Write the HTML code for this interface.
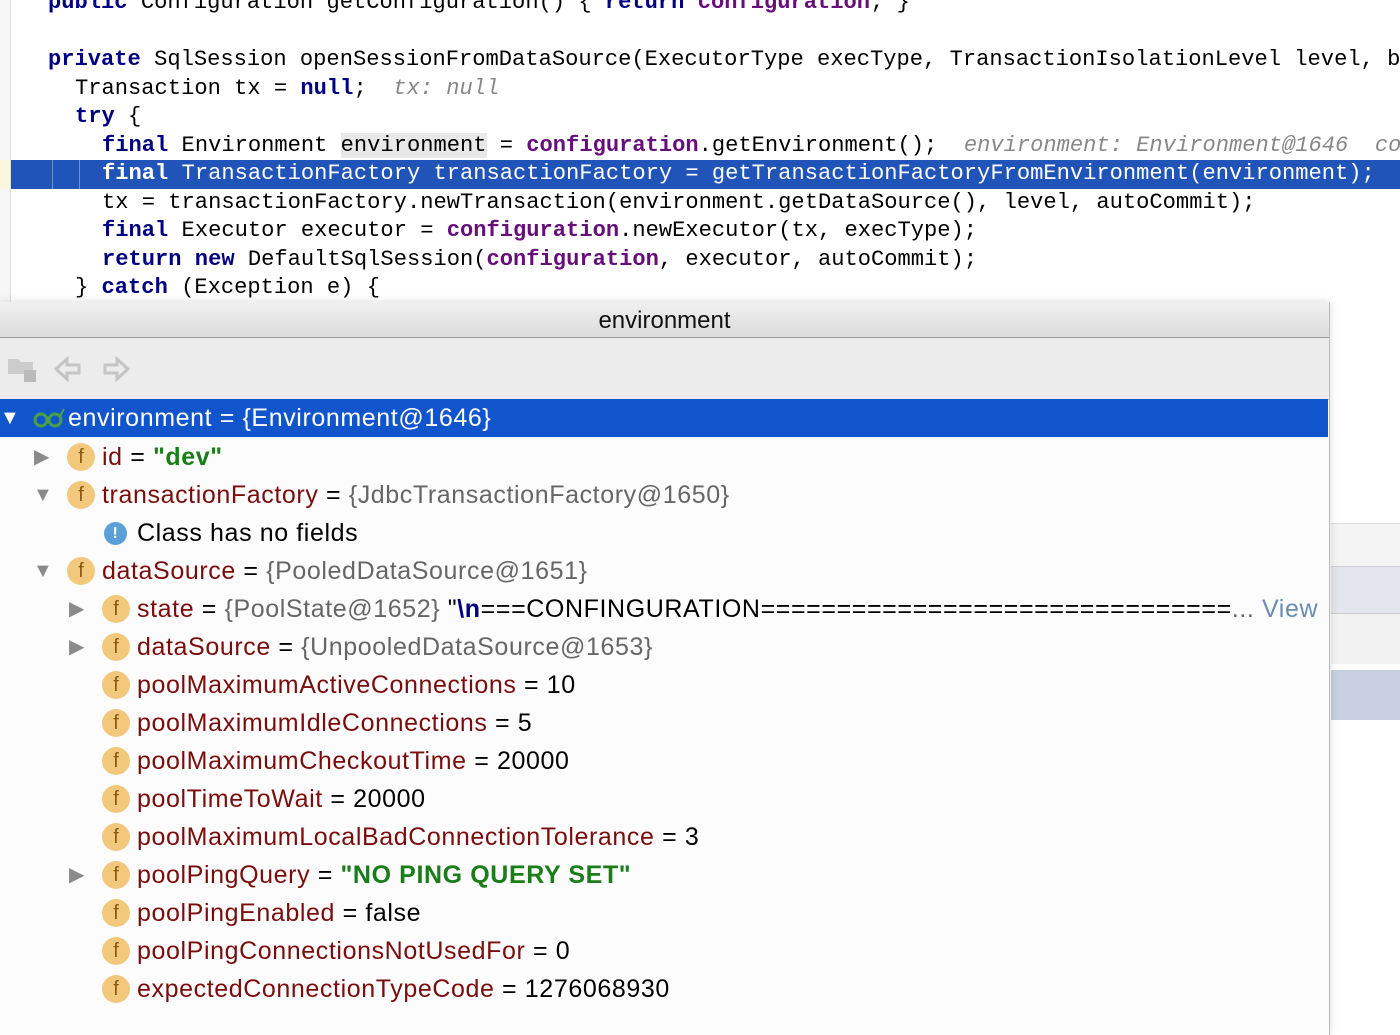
<!DOCTYPE html>
<html><head><meta charset="utf-8"><style>
html,body{margin:0;padding:0;width:1400px;height:1035px;overflow:hidden;background:#fff;position:relative}
.code{position:absolute;left:0;top:2px;width:1400px;font-family:"Liberation Mono",monospace;font-size:22.1px;color:#000}
.ln{position:absolute;height:28.5px;line-height:28.5px;white-space:pre;left:11px;width:1389px}
.kw{color:#000080;font-weight:bold}
.pu{color:#660e7a;font-weight:bold}
.hint{color:#888;font-style:italic}
.hl{background:#2154b8;color:#fff}
.hl .kw,.hl .pu{color:#fff}
.gut{position:absolute;left:0;top:-2px;width:10px;height:302px;background:#f6f6f6;border-right:1px solid #ddd}
.pop{position:absolute;left:0;top:302px;width:1329px;height:733px;background:#fcfcfc;border-right:1px solid #bbb;box-shadow:0 0 8px rgba(0,0,0,.15)}
.hdr{height:35px;background:linear-gradient(#f0f0f0,#dcdcdc);border-bottom:1px solid #999;text-align:center;font:24px "Liberation Sans",sans-serif;line-height:37px;color:#111}
.tb{height:61px;background:#ececec;border-bottom:1px solid #c8c8c8;position:relative}
.row{position:absolute;left:0;width:1328px;height:38px;font:25px "Liberation Sans",sans-serif;letter-spacing:0.6px;line-height:38px;white-space:nowrap;color:#000}
.sel{background:#1155cc;color:#fff}
.ar{position:absolute;top:0;color:#8a8a8a;font-size:20px;letter-spacing:0}
.ic{position:absolute;top:5px;width:28px;height:28px;border-radius:50%;background:#f2c97c;color:#8a5a10;font-size:20px;text-align:center;line-height:28px;font-family:"Liberation Sans",sans-serif;letter-spacing:0}
.n{color:#7a0c0c}
.g{color:#666}
.s{color:#1a7d1a;font-weight:bold}
.t{position:absolute;top:0}
</style></head><body>
<div class="code">
<div class="gut"></div>
<div style="position:absolute;left:0;top:158px;width:10px;height:28.5px;background:#fbf6dc"></div>
<div class="ln" style="top:-13px"><span style="position:absolute;left:37px"><span class="kw">public</span> Configuration getConfiguration() { <span class="kw">return</span> <span class="pu">configuration</span>; }</span></div>
<div class="ln" style="top:44px"><span style="position:absolute;left:37px"><span class="kw">private</span> SqlSession openSessionFromDataSource(ExecutorType execType, TransactionIsolationLevel level, b</span></div>
<div class="ln" style="top:72.5px"><span style="position:absolute;left:64px">Transaction tx = <span class="kw">null</span>;  <span class="hint">tx: null</span></span></div>
<div class="ln" style="top:101px"><span style="position:absolute;left:64px"><span class="kw">try</span> {</span></div>
<div class="ln" style="top:129.5px"><span style="position:absolute;left:91px"><span class="kw">final</span> Environment <span style="background:#e8e8e8">environment</span> = <span class="pu">configuration</span>.getEnvironment();  <span class="hint">environment: Environment@1646  co</span></span></div>
<div class="ln hl" style="top:158px"><span style="position:absolute;left:41px;top:0;width:1px;height:28.5px;background:#6f8fd0"></span><span style="position:absolute;left:68px;top:0;width:1px;height:28.5px;background:#6f8fd0"></span><span style="position:absolute;left:91px"><span class="kw">final</span> TransactionFactory transactionFactory = getTransactionFactoryFromEnvironment(environment);</span></div>
<div class="ln" style="top:186.5px"><span style="position:absolute;left:91px">tx = transactionFactory.newTransaction(environment.getDataSource(), level, autoCommit);</span></div>
<div class="ln" style="top:215px"><span style="position:absolute;left:91px"><span class="kw">final</span> Executor executor = <span class="pu">configuration</span>.newExecutor(tx, execType);</span></div>
<div class="ln" style="top:243.5px"><span style="position:absolute;left:91px"><span class="kw">return new</span> DefaultSqlSession(<span class="pu">configuration</span>, executor, autoCommit);</span></div>
<div class="ln" style="top:272px"><span style="position:absolute;left:64px">} <span class="kw">catch</span> (Exception e) {</span></div>
</div>
<div style="position:absolute;left:1331px;top:523px;width:69px;height:43px;background:#f4f4f4;border-top:1px solid #ddd"></div>
<div style="position:absolute;left:1331px;top:566px;width:69px;height:47px;background:#e3e6ec;border-top:1px solid #ccc"></div>
<div style="position:absolute;left:1331px;top:613px;width:69px;height:50px;background:#f2f2f2;border-top:1px solid #ccc"></div>
<div style="position:absolute;left:1331px;top:670px;width:69px;height:50px;background:#c7cfe0"></div>
<div class="pop">
<div class="hdr">environment</div>
<div class="tb">
<svg style="position:absolute;left:6px;top:17px" width="32" height="30"><path d="M2 4h10l3 3h12v12H2z" fill="#ccc"/><rect x="18" y="15" width="12" height="12" fill="#bbb"/></svg>
<svg style="position:absolute;left:54px;top:18px" width="28" height="26"><path d="M2 13L13 3v6h12v8H13v6z" fill="none" stroke="#c4c4c4" stroke-width="3"/></svg>
<svg style="position:absolute;left:102px;top:18px" width="28" height="26"><path d="M26 13L15 3v6H3v8h12v6z" fill="none" stroke="#c4c4c4" stroke-width="3"/></svg>
</div>
<div class="row sel" style="top:97px"><span class="ar" style="left:0px;color:#fff">▼</span>
<svg style="position:absolute;left:33px;top:8px" width="32" height="22"><circle cx="8" cy="13" r="6" fill="none" stroke="#4aa04a" stroke-width="3"/><circle cx="22" cy="13" r="6" fill="none" stroke="#4aa04a" stroke-width="3"/><path d="M14 12h2M27 9l4-7" stroke="#4aa04a" stroke-width="2"/></svg>
<span class="t" style="left:68px">environment = {Environment@1646}</span></div>
<div class="row" style="top:136px"><span class="ar" style="left:34px">▶</span><span class="ic" style="left:67px">f</span><span class="t" style="left:102px"><span class="n">id</span> = <span class="s">"dev"</span></span></div>
<div class="row" style="top:174px"><span class="ar" style="left:33px">▼</span><span class="ic" style="left:67px">f</span><span class="t" style="left:102px"><span class="n">transactionFactory</span> = <span class="g">{JdbcTransactionFactory@1650}</span></span></div>
<div class="row" style="top:212px"><span style="position:absolute;left:104px;top:8px;width:23px;height:23px;border-radius:50%;background:#5a9fd8;color:#fff;font-size:16px;line-height:23px;text-align:center;font-weight:bold">!</span><span class="t" style="left:137px">Class has no fields</span></div>
<div class="row" style="top:250px"><span class="ar" style="left:33px">▼</span><span class="ic" style="left:67px">f</span><span class="t" style="left:102px"><span class="n">dataSource</span> = <span class="g">{PooledDataSource@1651}</span></span></div>
<div class="row" style="top:288px"><span class="ar" style="left:69px">▶</span><span class="ic" style="left:102px">f</span><span class="t" style="left:137px"><span class="n">state</span> = <span class="g">{PoolState@1652}</span> "<b style="color:#000080">\n</b>===CONFINGURATION===============================<span class="g">...</span> <span style="color:#6a8cb0">View</span></span></div>
<div class="row" style="top:326px"><span class="ar" style="left:69px">▶</span><span class="ic" style="left:102px">f</span><span class="t" style="left:137px"><span class="n">dataSource</span> = <span class="g">{UnpooledDataSource@1653}</span></span></div>
<div class="row" style="top:364px"><span class="ic" style="left:102px">f</span><span class="t" style="left:137px"><span class="n">poolMaximumActiveConnections</span> = 10</span></div>
<div class="row" style="top:402px"><span class="ic" style="left:102px">f</span><span class="t" style="left:137px"><span class="n">poolMaximumIdleConnections</span> = 5</span></div>
<div class="row" style="top:440px"><span class="ic" style="left:102px">f</span><span class="t" style="left:137px"><span class="n">poolMaximumCheckoutTime</span> = 20000</span></div>
<div class="row" style="top:478px"><span class="ic" style="left:102px">f</span><span class="t" style="left:137px"><span class="n">poolTimeToWait</span> = 20000</span></div>
<div class="row" style="top:516px"><span class="ic" style="left:102px">f</span><span class="t" style="left:137px"><span class="n">poolMaximumLocalBadConnectionTolerance</span> = 3</span></div>
<div class="row" style="top:554px"><span class="ar" style="left:69px">▶</span><span class="ic" style="left:102px">f</span><span class="t" style="left:137px"><span class="n">poolPingQuery</span> = <span class="s">"NO PING QUERY SET"</span></span></div>
<div class="row" style="top:592px"><span class="ic" style="left:102px">f</span><span class="t" style="left:137px"><span class="n">poolPingEnabled</span> = false</span></div>
<div class="row" style="top:630px"><span class="ic" style="left:102px">f</span><span class="t" style="left:137px"><span class="n">poolPingConnectionsNotUsedFor</span> = 0</span></div>
<div class="row" style="top:668px"><span class="ic" style="left:102px">f</span><span class="t" style="left:137px"><span class="n">expectedConnectionTypeCode</span> = 1276068930</span></div>
</div>
</body></html>
